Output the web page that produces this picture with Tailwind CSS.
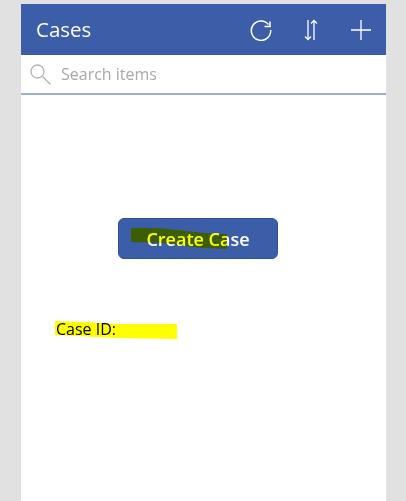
<!DOCTYPE html>
<html lang="en">
<head>
    <meta charset="UTF-8">
    <meta name="viewport" content="width=device-width, initial-scale=1.0">
    <script src="https://cdn.jsdelivr.net/npm/@tailwindcss/browser@4"></script>
    <title>Cases</title>
</head>
<body class="bg-[#e1e1e1] h-[501px] overflow-hidden font-['Open_Sans',sans-serif]">

    <div class="relative ml-[21px] mt-[4px] w-[365px] h-[497px] bg-white flex flex-col">
        <!-- Header -->
        <div class="h-[51px] bg-[#3c5ea8] flex items-center pl-[15px] text-white">
            <h1 class="text-[20.5px] leading-none flex-1">Cases</h1>
            <svg class="w-[22px] h-[22px] mr-[32px]" viewBox="0 0 22 22" fill="none" stroke="white" stroke-width="1.5">
                <path d="M18.5 5.5A9.7 9.7 0 1 0 20.7 11"/>
                <path d="M20 2.5v5h-5.5"/>
            </svg>
            <svg class="w-[14px] h-[22px] mr-[33px]" viewBox="0 0 14 22" fill="none" stroke="white" stroke-width="1.3">
                <path d="M4 1v19.5M1 17.5l3 3 3-3"/>
                <path d="M10 21V1.5M7 4.5l3-3 3 3"/>
            </svg>
            <svg class="w-[20px] h-[20px] mr-[15px]" viewBox="0 0 20 20" fill="none" stroke="white" stroke-width="1.3">
                <path d="M10 0v20M0 10h20"/>
            </svg>
        </div>

        <!-- Search -->
        <div class="h-[40px] border-b-2 border-[#9aaddb] flex items-center pl-[9px]">
            <svg class="w-[21px] h-[21px] mr-[10px]" viewBox="0 0 21 21" fill="none" stroke="#b3b3b3" stroke-width="1.3">
                <circle cx="7.5" cy="7.5" r="6.5"/>
                <path d="M12.5 12.5 20.5 20.5"/>
            </svg>
            <span class="text-[16px] text-[#a9a9a9]">Search items</span>
        </div>

        <!-- Body -->
        <div class="flex-1 flex flex-col">
            <button class="self-start ml-[97px] mt-[123px] w-[160px] h-[41px] rounded-[6px] bg-[#3c5ea8] border border-[#2f4f96] text-white text-[18px] leading-none font-semibold">Create Case</button>
            <p class="ml-[35px] mt-[59px] text-[16px] leading-[22px] text-black">Case ID:</p>
        </div>

        <!-- Highlighter marks -->
        <svg class="absolute left-0 top-0 w-[365px] h-[497px] mix-blend-multiply pointer-events-none" viewBox="0 0 365 497" fill="#ffff00">
            <path d="M110 224 137 224 184 229 206 230V245L181 244 144 239 110 238Z"/>
            <path d="M34 317 62 318 96 320 156 320V335L96 334 34 331Z"/>
        </svg>
    </div>

</body>
</html>
